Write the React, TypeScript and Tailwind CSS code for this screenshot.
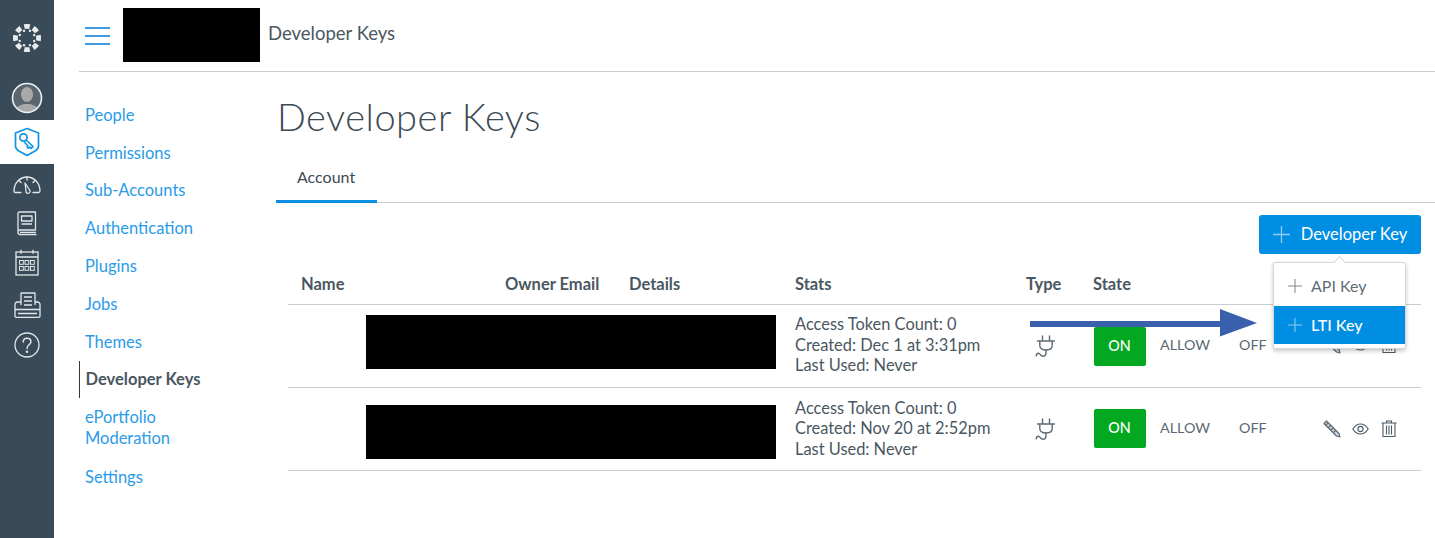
import React from "react";

const navItems = ["People","Permissions","Sub-Accounts","Authentication","Plugins","Jobs","Themes"];

function Logo() {
  const segs = Array.from({ length: 8 }, (_, i) => i * 45);
  return (
    <svg width="30" height="30" viewBox="0 0 30 30" fill="#e8ecef">
      {segs.map((a) => (
        <g key={a} transform={`rotate(${a} 15 15)`}>
          <path d="M11.800 1.300a14 14 0 0 1 6.400 0l-1 4.800a9.500 9.500 0 0 0-4.400 0z" />
          <circle cx="18" cy="7.800" r="1.200" />
        </g>
      ))}
    </svg>
  );
}

function Avatar() {
  return (
    <svg width="32" height="32" viewBox="0 0 32 32">
      <defs>
        <clipPath id="av"><circle cx="16" cy="16" r="14.500" /></clipPath>
      </defs>
      <circle cx="16" cy="16" r="14.500" fill="#5b6770" />
      <g clipPath="url(#av)" fill="#a9a9a9">
        <ellipse cx="16" cy="12.500" rx="6" ry="7.500" />
        <path d="M3 32c0-7 6-9 10-10h6c4 1 10 3 10 10z" />
      </g>
      <circle cx="16" cy="16" r="14.500" fill="none" stroke="#eef1f3" strokeWidth="1.600" />
    </svg>
  );
}

function Shield() {
  return (
    <svg width="26" height="30" viewBox="0 0 26 30" fill="none" stroke="#0f93e4" strokeWidth="1.700" strokeLinejoin="round" strokeLinecap="round">
      <path d="M13 1.500 24.500 6v13c0 2-1 3.500-3 4.700L13 28.500l-8.500-4.800c-2-1.200-3-2.700-3-4.700V6z" />
      <circle cx="9.500" cy="10.500" r="3.600" />
      <path d="M12 13l7 6.500-1.800 1.800-1.500-1.200-1.200 1-1.300-1.300.5-1.300-3-3" />
    </svg>
  );
}

function Gauge() {
  return (
    <svg width="28" height="20" viewBox="0 0 28 20" fill="none" stroke="#e2e6e9" strokeWidth="1.300" strokeLinecap="round" strokeLinejoin="round">
      <path d="M8 18.500H2.500C1.500 18.500 1 17.800 1 17c0-8 6-14 13-14s13 6 13 14c0 .8-.5 1.500-1.500 1.500H20" />
      <path d="M14 3v3M6 6.500l2 2M22 6.500l-2 2" />
      <path d="M12 9l5 7.500a2.200 2.200 0 0 1-3.800 2z" />
    </svg>
  );
}

function Book() {
  return (
    <svg width="22" height="26" viewBox="0 0 22 26" fill="none" stroke="#e2e6e9" strokeWidth="1.300" strokeLinejoin="round">
      <path d="M2 21V2.500C2 1.500 2.500 1 3.500 1h16v18H4c-1.500 0-2 1-2 2s.5 2.500 2 2.500h16.500" />
      <rect x="5.500" y="5" width="10.500" height="5" />
      <path d="M5.500 13h10.500M4 21.300h16" />
    </svg>
  );
}

function Calendar() {
  const cells = [0, 1].flatMap((r) => [0, 1, 2].map((c) => [c, r]));
  return (
    <svg width="24" height="27" viewBox="0 0 24 27" fill="none" stroke="#e2e6e9" strokeWidth="1.300">
      <rect x="1" y="3" width="22" height="23" />
      <path d="M1 8h22M6 .8v4M18 .8v4" />
      {cells.map(([c, r]) => (
        <rect key={`${c}${r}`} x={4.500 + c * 5.500} y={11.500 + r * 6} width="3.800" height="3.800" strokeWidth="1" />
      ))}
    </svg>
  );
}

function Inbox() {
  return (
    <svg width="27" height="26" viewBox="0 0 27 26" fill="none" stroke="#e2e6e9" strokeWidth="1.300" strokeLinejoin="round">
      <path d="M7 13V1h14v12" />
      <path d="M10 5h8M10 9h8M10 13h8" />
      <path d="M7 10H3.500C2 10 1 11 1 12.500V24c0 .8.500 1.300 1.300 1.300h22.400c.8 0 1.300-.5 1.300-1.300V12.500C26 11 25 10 23.500 10H21" />
      <path d="M1 17.500h25M4 21.500h19" />
    </svg>
  );
}

function Help() {
  return (
    <svg width="26" height="26" viewBox="0 0 26 26" fill="none" stroke="#e2e6e9" strokeWidth="1.300" strokeLinecap="round">
      <circle cx="13" cy="13" r="12" />
      <path d="M9.200 10c0-2.300 1.700-3.800 3.900-3.800s3.800 1.500 3.800 3.500c0 3-3.900 3.300-3.900 6.800" strokeWidth="1.500" />
      <circle cx="13" cy="19.800" r=".6" fill="#e2e6e9" />
    </svg>
  );
}

function Plus({ size, color }: { size: number; color: string }) {
  return (
    <svg width={size} height={size} viewBox="0 0 16 16" stroke={color} strokeWidth="1.200">
      <path d="M8 0v16M0 8h16" />
    </svg>
  );
}

function Plug() {
  return (
    <svg width="20" height="23" viewBox="0 0 20 23" fill="none" stroke="#5b6b76" strokeWidth="1.400" strokeLinecap="round" strokeLinejoin="round">
      <path d="M7.500 1v5M14.500 1v5M2.500 6h17M4.800 6v4.500c0 3 2.700 4.500 6.200 4.500s6.200-1.500 6.200-4.500V6" />
      <path d="M11 15v2.500c0 2.300-1.500 3.800-3.400 3.800-2 0-2.300-3-4.200-3-1.200 0-2 .9-2.200 2.500" />
    </svg>
  );
}

function Pencil() {
  return (
    <svg width="18" height="18" viewBox="0 0 18 18" fill="none" stroke="#5b6b76" strokeWidth="1.200" strokeLinejoin="round">
      <path d="M1 3.500 3.500 1 16 13.500l1 3.500-3.500-1z" fill="#cfd4d8" />
      <path d="M3 5l2-2M5.500 7.500l2-2M8 10l2-2M10.500 12.500l2-2" />
    </svg>
  );
}

function Eye() {
  return (
    <svg width="17" height="12" viewBox="0 0 17 12" fill="none" stroke="#4b5b66" strokeWidth="1.100">
      <path d="M.8 6C2.800 2.800 5.500 1 8.500 1s5.700 1.800 7.700 5c-2 3.200-4.700 5-7.700 5S2.800 9.200.8 6z" />
      <circle cx="8.500" cy="6" r="2.600" />
    </svg>
  );
}

function Trash() {
  return (
    <svg width="16" height="17" viewBox="0 0 16 17" fill="none" stroke="#4b5b66" strokeWidth="1.100">
      <path d="M.5 3h15M5.500 3V1h5v2M2 3v13.500h12V3M5.500 5.500v9M8 5.500v9M10.500 5.500v9" />
    </svg>
  );
}

function Row({ created, first }: { created: string; first: boolean }) {
  return (
    <div className="grid grid-cols-[204px_124px_166px_231px_67px_341px] h-[83px] border-b border-[#c7cdd1] items-center">
      <div className="col-span-3 pl-[78px]">
        <div className={first ? "w-[410px] h-[54px] bg-black mb-[8px]" : "w-[410px] h-[54px] bg-black mt-[6px]"} />
      </div>
      <div className={first ? "pl-[13px] pb-[2px] text-[16.400px] leading-[20.600px] text-[#4a5761] whitespace-nowrap" : "pl-[13px] pb-[1px] text-[16.400px] leading-[20.600px] text-[#4a5761] whitespace-nowrap"}>
        <div>Access Token Count: 0</div>
        <div>{created}</div>
        <div>Last Used: Never</div>
      </div>
      <div className="pl-[22px] pt-[1px]"><Plug /></div>
      <div className={first ? "flex items-center pl-[14px] text-[14.300px] text-[#5b6973]" : "flex items-center pl-[14px] pb-[2px] text-[14.300px] text-[#5b6973]"}>
        <div className="w-[52px] h-[39px] bg-[#02a81f] text-white rounded-[2px] flex items-center justify-center font-medium pr-[1px]">ON</div>
        <span className={first ? "ml-[14px] mb-[2px]" : "ml-[14px]"}>ALLOW</span>
        <span className={first ? "ml-[29px] mb-[2px]" : "ml-[29px]"}>OFF</span>
        <div className={first ? "ml-[56px] flex items-center gap-[11.500px] pb-[3px]" : "ml-[56px] flex items-center gap-[11.500px] pt-[1px]"}>
          <Pencil />
          <Eye />
          <Trash />
        </div>
      </div>
    </div>
  );
}

export default function App() {
  return (
    <div className="w-[1435px] h-[538px] flex overflow-hidden bg-white font-['Lato','Liberation_Sans',sans-serif] text-[#2d3b45]">
      <aside className="w-[54px] h-full bg-[#394b58] flex flex-col items-center pt-[23px] shrink-0">
        <Logo />
        <div className="mt-[29px]"><Avatar /></div>
        <div className="mt-[6px] w-full h-[44px] bg-white flex items-center justify-center"><Shield /></div>
        <div className="mt-[10px]"><Gauge /></div>
        <div className="mt-[17px]"><Book /></div>
        <div className="mt-[12px]"><Calendar /></div>
        <div className="mt-[16px]"><Inbox /></div>
        <div className="mt-[14px]"><Help /></div>
      </aside>

      <div className="flex-1 pl-[25px] pr-[2px] flex flex-col">
        <header className="h-[72px] border-b border-[#c7cdd1] flex items-center shrink-0">
          <div className="ml-[6px] flex flex-col gap-[6px] w-[25px]">
            <div className="h-[2px] bg-[#3f9ae2]" />
            <div className="h-[2px] bg-[#3f9ae2]" />
            <div className="h-[2px] bg-[#3f9ae2]" />
          </div>
          <div className="ml-[13px] w-[137px] h-[54px] bg-black mb-[1px]" />
          <div className="ml-[8px] text-[18.500px] text-[#4a5761] mb-[4px]">Developer Keys</div>
        </header>

        <div className="flex flex-1">
          <nav className="w-[198px] shrink-0 pt-[24.200px] text-[16.500px] text-[#2a9be8]">
            {navItems.map((n) => (
              <div key={n} className="h-[37.850px] pl-[6px] flex items-center">{n}</div>
            ))}
            <div className="h-[37px] pl-[5.500px] border-l-[1.500px] border-[#2d3b45] flex items-center font-bold text-[#4a5761] text-[16.500px]">Developer Keys</div>
            <div className="pl-[6px] mt-[8.500px] leading-[21px]">ePortfolio<br />Moderation</div>
            <div className="h-[38px] pl-[6px] mt-[9.500px] flex items-center">Settings</div>
          </nav>

          <main className="flex-1 relative">
            <h1 className="pt-[20px] text-[38px] font-light leading-[48px] tracking-[0.5px] text-[#3c4a54]">Developer Keys</h1>
            <div className="mt-[23px] border-b border-[#c7cdd1] h-[40px] w-[1160px] -ml-px">
              <div className="w-[101px] h-[40px] border-b-[3px] border-[#0b8fe2] text-[16px] text-[#3c4a54] pt-[2px] pl-[21px]">Account</div>
            </div>
            <div className="ml-[11px] w-[1133px]">
              <div className="flex justify-end mt-[12px]">
                <button className="w-[162px] h-[39px] bg-[#008ee2] text-white rounded-[3px] flex items-center justify-center gap-[11px] text-[16.500px]">
                  <Plus size={17} color="#8fcdf2" />
                  Developer Key
                </button>
              </div>
              <div className="grid grid-cols-[204px_124px_166px_231px_67px_341px] h-[51px] items-center font-bold text-[16.500px] border-b border-[#c7cdd1] text-[#4a5761]">
                <div className="pl-[13px] pt-[11px]">Name</div>
                <div className="pl-[13px] pt-[11px]">Owner Email</div>
                <div className="pl-[13px] pt-[11px]">Details</div>
                <div className="pl-[13px] pt-[11px]">Stats</div>
                <div className="pl-[13px] pt-[11px]">Type</div>
                <div className="pl-[13px] pt-[11px]">State</div>
              </div>
              <Row created="Created: Dec 1 at 3:31pm" first={true} />
              <Row created="Created: Nov 20 at 2:52pm" first={false} />
            </div>

            <div className="absolute left-[996px] top-[190px] w-[133px] bg-white border border-[#d5d9dc] rounded-[2px] shadow-[0_2px_4px_rgba(0,0,0,0.22)] pt-[3px] pb-[4px]">
              <div className="absolute left-[61px] -top-[5px] w-[9px] h-[9px] rotate-45 bg-white border-l border-t border-[#d5d9dc]" />
              <div className="h-[40px] flex items-center pl-[14px] gap-[9px] text-[16px] text-[#5f6d77]">
                <Plus size={14} color="#7d8992" />
                API Key
              </div>
              <div className="h-[38px] bg-[#008ee2] flex items-center pl-[14px] gap-[9px] text-[16px] font-medium text-white">
                <Plus size={14} color="#8fcdf2" />
                LTI Key
              </div>
            </div>

            <svg className="absolute left-[753px] top-[237px]" width="228" height="28" viewBox="0 0 228 28" fill="#3a60ad">
              <path d="M0 12h190V0l37 14-37 13.500V18H0z" />
            </svg>
          </main>
        </div>
      </div>
    </div>
  );
}
